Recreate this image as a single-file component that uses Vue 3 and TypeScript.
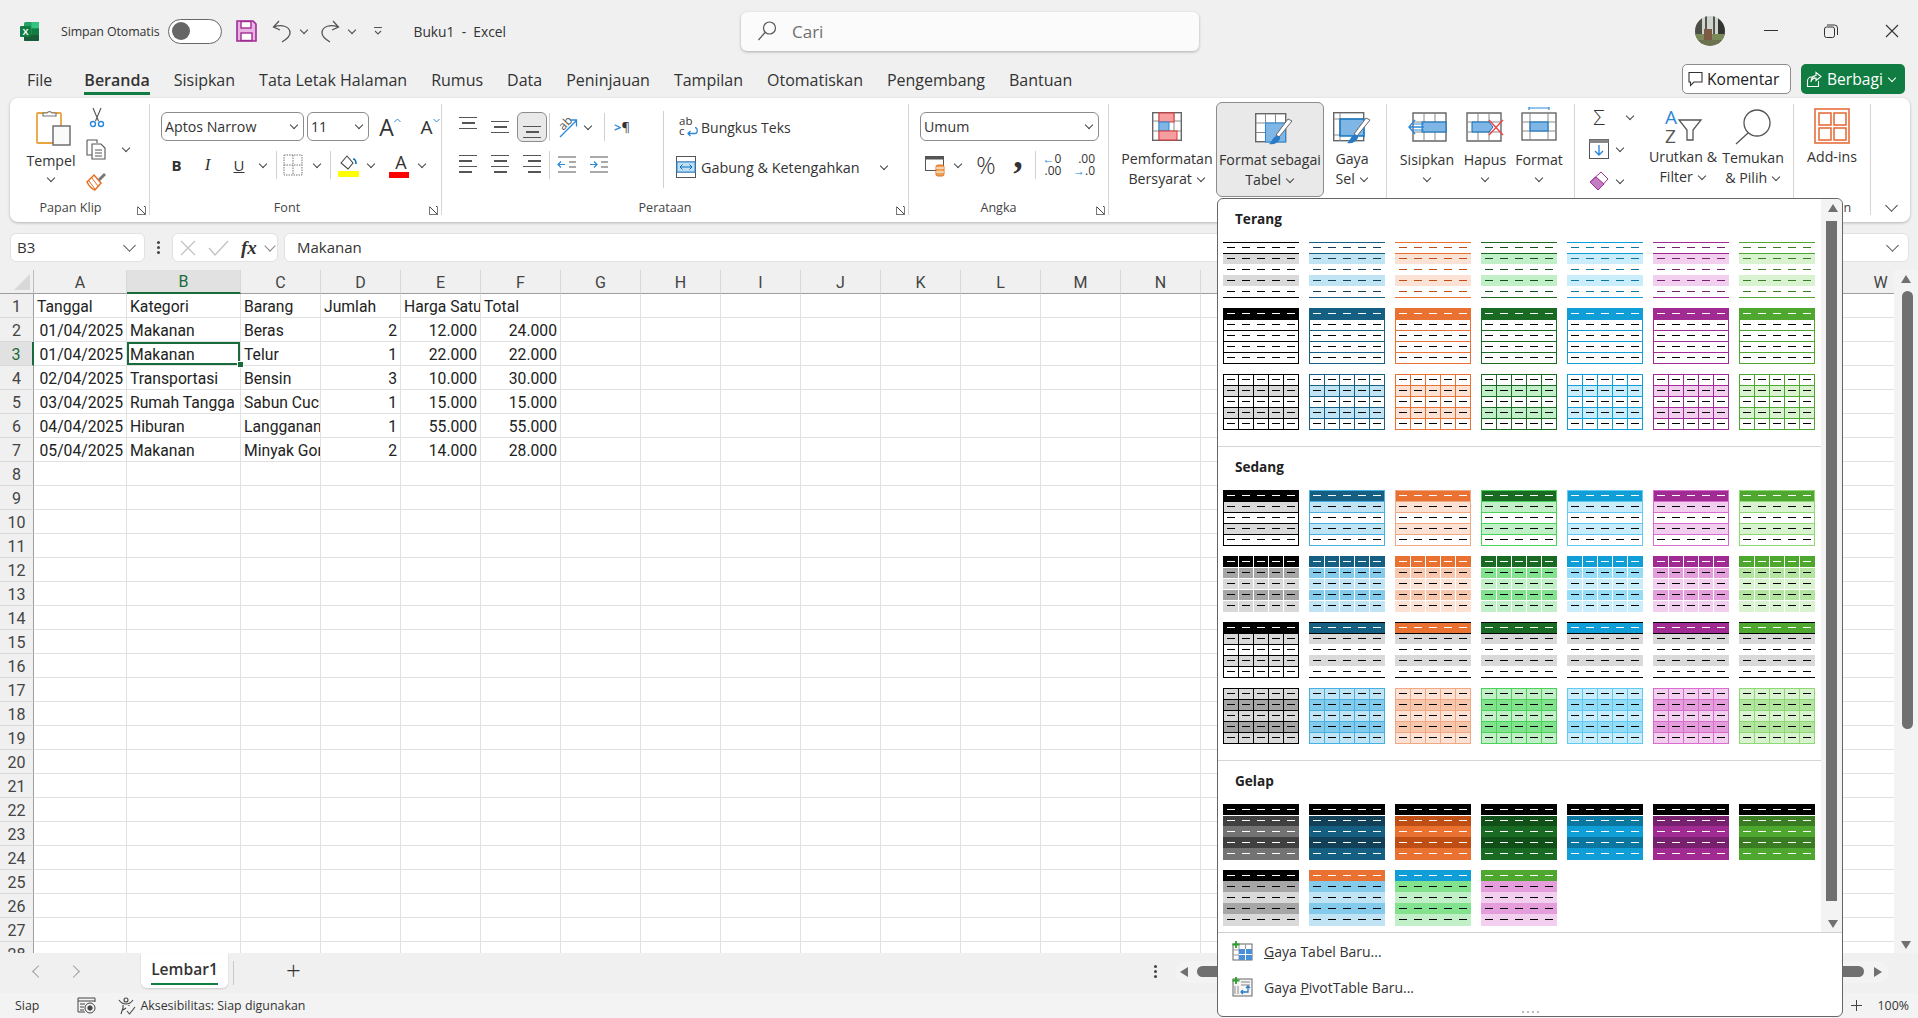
<template>
  <div class="app">
    <!-- title bar -->
    <header class="titlebar">
      <svg class="xl-logo" width="21" height="21" viewBox="0 0 21 21">
        <rect x="5" y="1" width="15" height="19" rx="1.5" fill="#21a366" />
        <rect x="12.5" y="1" width="7.5" height="6.5" fill="#33c481" />
        <rect x="12.5" y="7.5" width="7.5" height="6" fill="#107c41" />
        <rect x="5" y="13.5" width="15" height="6.5" rx="1" fill="#185c37" />
        <rect x="1" y="5" width="11" height="11" rx="1" fill="#107c41" />
        <text x="6.5" y="13.6" text-anchor="middle" class="xl-x">X</text>
      </svg>
      <span class="autosave">Simpan Otomatis</span>
      <span class="toggle"><i></i></span>
      <svg class="qat-save" width="21" height="22" viewBox="0 0 21 22">
        <path d="M1 1h16l3 3v17H1z" fill="#e9b3e4" stroke="#a02b93" stroke-width="1.6" />
        <rect x="5" y="1.5" width="10" height="6.5" fill="#fff" stroke="#a02b93" stroke-width="1.4" />
        <rect x="5" y="13" width="11" height="7.5" fill="#fff" stroke="#a02b93" stroke-width="1.4" />
      </svg>
      <svg class="qat-undo" width="20" height="24" viewBox="0 0 20 24" fill="none" stroke="#555" stroke-width="1.3">
        <path d="M7 2 1.5 8 8 11M2 8c7-3 16-1 16 6 0 3-3 6-8 9" />
      </svg>
      <span class="chev qat-chev"></span>
      <svg class="qat-redo" width="20" height="24" viewBox="0 0 20 24" fill="none" stroke="#555" stroke-width="1.3">
        <path d="M13 2l5.500 6L12 11M18 8C11 5 2 7 2 14c0 3 3 6 8 9" />
      </svg>
      <span class="chev qat-chev"></span>
      <svg class="qat-more" width="10" height="10" viewBox="0 0 10 10" fill="none" stroke="#555" stroke-width="1.1">
        <path d="M1 1.500h8M2 5l3 3 3-3" />
      </svg>
      <span class="doc-title">Buku1&nbsp; - &nbsp;Excel</span>
      <div class="search">
        <svg width="20" height="20" viewBox="0 0 20 20" fill="none" stroke="#555" stroke-width="1.2">
          <circle cx="12.500" cy="7" r="6" />
          <path d="M8 11.500 1.500 19" />
        </svg>
        <span>Cari</span>
      </div>
      <svg class="avatar" width="30" height="30" viewBox="0 0 30 30">
        <defs>
          <clipPath id="avatar-clip"><circle cx="15" cy="15" r="15" /></clipPath>
        </defs>
        <g clip-path="url(#avatar-clip)">
          <rect width="30" height="30" fill="#cfd4cf" />
          <rect x="0" y="0" width="7" height="30" fill="#4b4f48" />
          <rect x="23" y="0" width="7" height="30" fill="#33352f" />
          <rect x="10" y="0" width="2" height="22" fill="#55564f" />
          <rect x="18" y="0" width="2" height="22" fill="#55564f" />
          <rect x="0" y="18" width="30" height="6" fill="#7a8a58" />
          <rect x="9" y="13" width="8" height="12" fill="#7d5a43" />
          <rect x="0" y="24" width="30" height="6" fill="#6c7150" />
        </g>
      </svg>
      <svg class="win-min" width="14" height="2" viewBox="0 0 14 2"><rect width="14" height="1" fill="#333" /></svg>
      <svg class="win-max" width="14" height="14" viewBox="0 0 14 14" fill="none" stroke="#333">
        <rect x="0.500" y="3" width="10" height="10.500" rx="2" />
        <path d="M3 1h7.500a3 3 0 0 1 3 3v7" />
      </svg>
      <svg class="win-close" width="14" height="14" viewBox="0 0 14 14" fill="none" stroke="#333" stroke-width="1.100">
        <path d="M1 1l12 12M13 1 1 13" />
      </svg>
    </header>

    <!-- menu tabs -->
    <nav class="tabs">
      <span v-for="tab in tabs" :key="tab" class="tab" :class="{ active: tab === 'Beranda' }">{{ tab }}</span>
      <div class="tab-actions">
        <button class="btn-comment">
          <svg width="15" height="16" viewBox="0 0 15 16" fill="none" stroke="#333" stroke-width="1.100">
            <path d="M1 1.500h13v9.500H6l-3.500 3.500V11H1z" />
          </svg>
          Komentar
        </button>
        <button class="btn-share">
          <svg width="17" height="17" viewBox="0 0 17 17" fill="none" stroke="#fff" stroke-width="1.100">
            <path d="M9 6H5.500v0C3 6 1.500 8 1.500 10v5.500h11V10" />
            <path d="M10 1.500l5 4-5 4V7C7 7 5.500 8.500 5 11c0-4 2-6.500 5-6.500z" />
          </svg>
          Berbagi
          <span class="chev chev-white"></span>
        </button>
      </div>
    </nav>

    <!-- ribbon -->
    <section class="ribbon">
      <div class="group g-clip">
        <div class="group-body clip-body">
          <div class="paste">
            <svg width="36" height="38" viewBox="0 0 36 38">
              <rect x="1" y="5" width="24" height="30" rx="1" fill="#fff" stroke="#e9a440" stroke-width="1.800" />
              <path d="M7 8V5h4a3 3 0 0 1 5 0h4v3z" fill="#fff" stroke="#777" stroke-width="1.200" />
              <rect x="17" y="18" width="17" height="19" fill="#fafafa" stroke="#666" stroke-width="1.400" />
            </svg>
            <span class="lbl">Tempel</span>
            <span class="chev paste-chev"></span>
          </div>
          <div class="clip-tools">
            <svg class="scissors" width="16" height="21" viewBox="0 0 16 21" fill="none" stroke="#555" stroke-width="1.100">
              <path d="M4 1l5.500 13M12 1 6.500 14" />
              <circle cx="4" cy="17" r="2.500" stroke="#2b88d8" stroke-width="1.400" />
              <circle cx="12" cy="17" r="2.500" stroke="#2b88d8" stroke-width="1.400" />
            </svg>
            <div class="copy-row">
              <svg width="22" height="21" viewBox="0 0 22 21" fill="none" stroke="#555" stroke-width="1.100">
                <path d="M1 1h10v3M1 1v15h5" />
                <path d="M6 5h9l4 4v11H6z" fill="#fff" />
                <path d="M9 11h7M9 14h7M9 17h7" />
              </svg>
              <span class="chev"></span>
            </div>
            <svg width="21" height="20" viewBox="0 0 21 20">
              <path d="M1 11 8 4l7 8-6 7c-3-1-6-4-8-8z" fill="#fff" stroke="#e56f1d" stroke-width="1.500" />
              <path d="M3 10l6 8M6 7l6 8" stroke="#e56f1d" />
              <path d="M12 8l6-6 2 2-6 6z" fill="#777" />
            </svg>
          </div>
        </div>
        <div class="group-label">Papan Klip</div>
        <span class="launcher"></span>
      </div>

      <div class="group g-font">
        <div class="group-body">
          <div class="font-r1">
            <div class="select"><span>Aptos Narrow</span><span class="chev"></span></div>
            <div class="select"><span>11</span><span class="chev"></span></div>
            <span class="grow-a">A<svg width="7" height="5" viewBox="0 0 7 5" fill="none" stroke="#2b88d8"><path d="M.5 4 3.500 1l3 3" /></svg></span>
            <span class="shrink-a">A<svg width="7" height="5" viewBox="0 0 7 5" fill="none" stroke="#2b88d8"><path d="M.5 1l3 3 3-3" /></svg></span>
          </div>
          <div class="font-r2">
            <b class="fmt">B</b>
            <i class="fmt fmt-i">I</i>
            <u class="fmt fmt-u">U</u>
            <span class="chev"></span>
            <span class="vsep"></span>
            <svg width="20" height="22" viewBox="0 0 20 22" fill="none" stroke="#777" stroke-dasharray="1.500 1">
              <rect x="1" y="1" width="18" height="20" /><path d="M10 1v20M1 11h18" />
            </svg>
            <span class="chev"></span>
            <span class="vsep"></span>
            <svg width="21" height="23" viewBox="0 0 21 23">
              <path d="M3 9 9 2l6 7-5 6z" fill="#fff" stroke="#444" stroke-width="1.100" />
              <path d="M15 5c2 0 3 2 3 5" fill="none" stroke="#0b6fb8" stroke-width="1.600" />
              <rect y="17" width="21" height="6" fill="#ffff00" />
            </svg>
            <span class="chev"></span>
            <span class="font-color">A<em></em></span>
            <span class="chev"></span>
          </div>
        </div>
        <div class="group-label">Font</div>
        <span class="launcher"></span>
      </div>

      <div class="group g-align">
        <div class="group-body align-body">
          <div class="align-left">
            <div class="align-r1">
              <span class="lines v-top"><i></i><i></i><i></i></span>
              <span class="lines v-mid"><i></i><i></i><i></i></span>
              <span class="lines v-bot selected"><i></i><i></i><i></i></span>
              <span class="vsep vsep-tall"></span>
              <svg class="svg-open" width="24" height="24" viewBox="0 0 24 24" fill="none">
                <text x="5" y="14" class="orient-t" transform="rotate(-45 9 11)">ab</text>
                <path d="M5 22 21 6M15 5h6.500v6.500" stroke="#2b88d8" stroke-width="1.300" />
              </svg>
              <span class="chev"></span>
              <span class="vsep vsep-tall"></span>
              <span class="rtl"><em>&gt;</em>¶</span>
            </div>
            <div class="align-r2">
              <span class="lines h-left"><i></i><i></i><i></i><i></i></span>
              <span class="lines h-center"><i></i><i></i><i></i><i></i></span>
              <span class="lines h-right"><i></i><i></i><i></i><i></i></span>
              <span class="vsep vsep-tall"></span>
              <svg width="20" height="20" viewBox="0 0 20 20" fill="none" stroke="#555" stroke-width="1.200">
                <path d="M1 2h18M12 7h7M12 12h7M1 17h18" />
                <path d="M8 9.500H1M4 6.500l-3 3 3 3" stroke="#2b88d8" />
              </svg>
              <svg width="20" height="20" viewBox="0 0 20 20" fill="none" stroke="#555" stroke-width="1.200">
                <path d="M1 2h18M12 7h7M12 12h7M1 17h18" />
                <path d="M1 9.500h7M5 6.500l3 3-3 3" stroke="#2b88d8" />
              </svg>
            </div>
          </div>
          <span class="vsep wrap-sep"></span>
          <div class="wrap-block">
            <div class="wrap-item">
              <span class="wrap-ico">
                <span class="wrap-ab">ab<br />c</span>
                <svg width="11" height="10" viewBox="0 0 11 10" fill="none" stroke="#2b88d8" stroke-width="1.300">
                  <path d="M8 .5c3 0 3 6 0 6H1M3.500 4 1 6.500 3.500 9" />
                </svg>
              </span>
              <span>Bungkus Teks</span>
            </div>
            <div class="wrap-item merge">
              <svg width="20" height="22" viewBox="0 0 20 22">
                <rect x=".5" y=".5" width="19" height="21" fill="#fff" stroke="#555" />
                <path d="M1 6h18M1 16h18" stroke="#555" />
                <rect x="1" y="6" width="18" height="10" fill="#bfdff5" stroke="#2b88d8" />
                <path d="M4 11h12M6.500 8.500 4 11l2.500 2.500M13.500 8.500 16 11l-2.500 2.500" fill="none" stroke="#0b6fb8" />
              </svg>
              <span class="merge-text">Gabung &amp; Ketengahkan</span>
              <span class="chev merge-chev"></span>
            </div>
          </div>
        </div>
        <div class="group-label">Perataan</div>
        <span class="launcher"></span>
      </div>

      <div class="group g-num">
        <div class="group-body">
          <div class="select num-select"><span>Umum</span><span class="chev"></span></div>
          <div class="num-r2">
            <svg width="20" height="23" viewBox="0 0 20 23">
              <rect x=".5" y="2.500" width="18" height="14" fill="#fff" stroke="#555" />
              <rect x=".5" y="2.500" width="18" height="3" fill="#555" />
              <rect x="11" y="11" width="8" height="11" rx="2" fill="#e9a45a" stroke="#e56f1d" />
              <path d="M11 14h8M11 18h8" stroke="#fff" />
            </svg>
            <span class="chev"></span>
            <span class="percent">%</span>
            <span class="comma">,</span>
            <span class="vsep"></span>
            <span class="dec-ico"><em>←</em>0<br />.00</span>
            <span class="dec-ico">.00<br /><em>→</em>.0</span>
          </div>
        </div>
        <div class="group-label">Angka</div>
        <span class="launcher"></span>
      </div>

      <div class="group g-style">
        <div class="group-body big-row">
          <div class="big b-cond">
            <svg class="big-ico" width="30" height="29" viewBox="0 0 30 29">
              <rect x=".7" y=".7" width="28.600" height="27.600" fill="#fff" stroke="#666" stroke-width="1.400" />
              <path d="M7 1v27M22 1v27M1 9h28M1 19h28" stroke="#888" />
              <rect x="7" y="1" width="15" height="9" fill="#f79ea0" stroke="#d93636" />
              <rect x="7" y="10" width="10" height="9" fill="#7fb6e6" stroke="#2b88d8" />
              <rect x="7" y="19" width="18" height="9" fill="#f79ea0" stroke="#d93636" />
            </svg>
            <span class="lbl">Pemformatan</span>
            <span class="lbl">Bersyarat <span class="chev"></span></span>
          </div>
          <div class="big b-table">
            <svg class="big-ico" width="38" height="36" viewBox="0 0 38 36">
              <rect x=".7" y=".7" width="30" height="28" fill="#fff" stroke="#666" stroke-width="1.400" />
              <path d="M10.500 1v28M20.500 1v28M1 10h30M1 19.500h30" stroke="#888" />
              <rect x="10.500" y="10" width="20" height="19" fill="#7fb6e6" stroke="#2b88d8" />
              <path d="M37 8 24 24l-3-2L33 6z" fill="#fff" stroke="#666" />
              <path d="M21 23c3-1 5 1 4 3-2 4-6 6-11 5 3-2 3-6 7-8z" fill="#2b7bc4" />
            </svg>
            <span class="lbl">Format sebagai</span>
            <span class="lbl">Tabel <span class="chev"></span></span>
          </div>
          <div class="big b-cell">
            <svg class="big-ico" width="38" height="36" viewBox="0 0 38 36">
              <rect x=".7" y=".7" width="30" height="28" fill="#fff" stroke="#666" stroke-width="1.400" />
              <path d="M7 1v28M1 7h30M1 23h30" stroke="#888" />
              <rect x="7" y="7" width="24" height="17" fill="#7fb6e6" stroke="#0b6fb8" stroke-width="1.400" />
              <path d="M37 8 24 24l-3-2L33 6z" fill="#fff" stroke="#666" />
              <path d="M21 23c3-1 5 1 4 3-2 4-6 6-11 5 3-2 3-6 7-8z" fill="#2b7bc4" />
            </svg>
            <span class="lbl">Gaya</span>
            <span class="lbl">Sel <span class="chev"></span></span>
          </div>
        </div>
      </div>

      <div class="group g-cells">
        <div class="group-body big-row">
          <div class="big b-ins">
            <svg class="big-ico" width="40" height="30" viewBox="0 0 40 30">
              <path d="M6 1h33v28H6z" fill="#fff" stroke="#666" stroke-width="1.400" />
              <path d="M17 1v28M28 1v28M6 10h33M6 20h33" stroke="#888" />
              <rect x="15" y="10" width="24" height="10" fill="#7fb6e6" stroke="#0b6fb8" />
              <path d="M17 15H2M8 8l-6 7 6 7" fill="none" stroke="#2b88d8" stroke-width="1.400" />
              <path d="M17 12H6M17 18H6" stroke="#2b88d8" />
            </svg>
            <span class="lbl">Sisipkan</span>
            <span class="chev"></span>
          </div>
          <div class="big b-del">
            <svg class="big-ico" width="38" height="30" viewBox="0 0 38 30">
              <path d="M1 1h34v28H1z" fill="#fff" stroke="#666" stroke-width="1.400" />
              <path d="M12 1v28M23 1v28M1 10h34M1 20h34" stroke="#888" />
              <path d="M6 10h17l4 5-4 5H6z" fill="#7fb6e6" stroke="#0b6fb8" />
              <path d="M23 8l14 15M37 8 23 23" stroke="#ef4444" stroke-width="1.400" />
            </svg>
            <span class="lbl">Hapus</span>
            <span class="chev"></span>
          </div>
          <div class="big b-frm">
            <svg class="big-ico" width="36" height="34" viewBox="0 0 36 34">
              <path d="M8 1h20M8 0v3M28 0v3" stroke="#2b88d8" stroke-width="1.200" />
              <rect x="1" y="6" width="34" height="27" fill="#fff" stroke="#666" stroke-width="1.400" />
              <path d="M9 6v27M27 6v27M1 15h34M1 24h34" stroke="#888" />
              <rect x="9" y="15" width="18" height="9" fill="#7fb6e6" stroke="#0b6fb8" />
            </svg>
            <span class="lbl">Format</span>
            <span class="chev"></span>
          </div>
        </div>
      </div>

      <div class="group g-edit">
        <div class="group-body big-row">
          <div class="edit-col">
            <div class="edit-row">
              <span class="sigma">Σ</span><span class="chev sigma-chev"></span>
            </div>
            <div class="edit-row">
              <svg width="20" height="20" viewBox="0 0 20 20">
                <rect x=".5" y=".5" width="19" height="19" fill="#fff" stroke="#555" />
                <rect x=".5" y=".5" width="19" height="3.500" fill="#888" />
                <path d="M10 6v10M6 12l4 4 4-4" fill="none" stroke="#2b88d8" stroke-width="1.400" />
              </svg>
              <span class="chev"></span>
            </div>
            <div class="edit-row">
              <svg width="20" height="20" viewBox="0 0 20 20">
                <path d="M12 1l7 7-10 11-8-8z" fill="#fff" stroke="#a02b93" />
                <path d="M7 6l8 7-6 6-8-8z" fill="#c27ec0" stroke="#a02b93" />
              </svg>
              <span class="chev"></span>
            </div>
          </div>
          <div class="big b-sort">
            <svg class="big-ico svg-open" width="38" height="36" viewBox="0 0 38 36" fill="none">
              <text x="1" y="16" class="sort-a">A</text>
              <text x="1" y="35" class="sort-z">Z</text>
              <path d="M15 12h22l-8 10v10h-6V22z" stroke="#555" stroke-width="1.300" />
            </svg>
            <span class="lbl">Urutkan &amp;</span>
            <span class="lbl">Filter <span class="chev"></span></span>
          </div>
          <div class="big b-find">
            <svg class="big-ico" width="38" height="37" viewBox="0 0 38 37" fill="none" stroke="#555" stroke-width="1.300">
              <circle cx="23" cy="15" r="13" />
              <path d="M14 25 2 36" />
            </svg>
            <span class="lbl">Temukan</span>
            <span class="lbl">&amp; Pilih <span class="chev"></span></span>
          </div>
        </div>
      </div>

      <div class="group g-add">
        <div class="group-body big-row">
          <div class="big b-add">
            <svg class="big-ico" width="36" height="36" viewBox="0 0 36 36" fill="none" stroke="#e56f3c" stroke-width="1.600">
              <rect x="1" y="1" width="34" height="34" />
              <rect x="5" y="5" width="12" height="12" />
              <rect x="20" y="5" width="12" height="12" />
              <rect x="5" y="20" width="12" height="12" />
              <rect x="20" y="20" width="12" height="12" />
            </svg>
            <span class="lbl">Add-ins</span>
          </div>
        </div>
        <div class="group-label">Add-in</div>
      </div>

      <span class="ribbon-collapse"></span>
    </section>

    <!-- formula bar -->
    <div class="formula">
      <div class="namebox"><span>B3</span><span class="chev chev-big"></span></div>
      <span class="dots-v"></span>
      <div class="fx-box">
        <svg width="16" height="16" viewBox="0 0 16 16" fill="none" stroke="#c2c2c2" stroke-width="1.300"><path d="M1 1l14 14M15 1 1 15" /></svg>
        <svg width="21" height="16" viewBox="0 0 21 16" fill="none" stroke="#c2c2c2" stroke-width="1.300"><path d="M1 8l6 7L20 1" /></svg>
        <span class="fx">fx</span>
        <span class="chev chev-grey"></span>
      </div>
      <div class="formula-input">
        <span>Makanan</span>
        <span class="chev chev-big"></span>
      </div>
    </div>

    <!-- sheet -->
    <div class="sheet">
      <div class="grid">
        <div class="corner"><i></i></div>
        <div v-for="col in columns" :key="col" class="col-head" :class="{ sel: col === 'B' }">{{ col }}</div>
        <template v-for="row in rowNums" :key="row">
          <div class="row-head" :class="{ sel: row === 3 }">{{ row }}</div>
          <div
            v-for="(col, c) in columns"
            :key="col"
            class="cell"
            :class="{ num: isNumeric(row, c), active: col === 'B' && row === 3 }"
          >{{ cellText(row, c) }}</div>
        </template>
      </div>
      <div class="vscroll">
        <span class="tri tri-up"></span>
        <span class="vthumb"></span>
        <span class="tri tri-down"></span>
      </div>
    </div>

    <!-- sheet tabs -->
    <div class="sheet-tabs">
      <span class="nav-arrow nav-left"></span>
      <span class="nav-arrow nav-right"></span>
      <div class="sheet-tab"><span>Lembar1</span></div>
      <span class="tab-sep"></span>
      <span class="add-sheet">+</span>
      <span class="dots-v dots-tabs"></span>
      <div class="hscroll">
        <span class="tri tri-left"></span>
        <span class="hthumb"></span>
        <span class="tri tri-right"></span>
      </div>
    </div>

    <!-- status bar -->
    <footer class="status">
      <span class="st-ready">Siap</span>
      <svg class="st-macro" width="19" height="17" viewBox="0 0 19 17" fill="none" stroke="#444">
        <path d="M1 1h17v4M1 1v14h7M1 4h17M3 7h5M3 10h4M3 13h4" />
        <circle cx="13" cy="11" r="5" />
        <circle cx="13" cy="11" r="2.200" fill="#444" />
      </svg>
      <svg class="st-a11y" width="18" height="18" viewBox="0 0 18 18" fill="none" stroke="#444" stroke-width="1.100">
        <circle cx="8" cy="3" r="2" />
        <path d="M1 3c2 3 4 4 7 4s5-1 7-4M5 8v3l-2 6M11 8v1M5 13l3-2" />
        <path d="M9 14l2.500 3L17 10" />
      </svg>
      <span class="st-a11y-text">Aksesibilitas: Siap digunakan</span>
      <span class="st-zoom">
        <svg width="11" height="11" viewBox="0 0 11 11" stroke="#444"><path d="M0 5.500h11M5.500 0v11" /></svg>
        <span>100%</span>
      </span>
    </footer>

    <!-- table styles gallery -->
    <div class="popup">
      <div class="gallery">
        <div class="styles">
          <section v-for="(group, g) in galleries" :key="group.title" class="style-group" :class="{ first: g === 0 }">
            <h4>{{ group.title }}</h4>
            <div class="thumbs">
              <svg
                v-for="(rects, t) in group.thumbs"
                :key="t"
                width="76"
                height="56"
                viewBox="0 0 76 56"
                shape-rendering="crispEdges"
              >
                <rect
                  v-for="(r, i) in rects"
                  :key="i"
                  :x="r.x"
                  :y="r.y"
                  :width="r.w"
                  :height="r.h"
                  :fill="r.c"
                />
              </svg>
            </div>
          </section>
        </div>
        <div class="gal-scroll">
          <span class="tri tri-up"></span>
          <span class="gal-thumb"></span>
          <span class="tri tri-down"></span>
        </div>
      </div>
      <div class="menu-item">
        <svg width="21" height="20" viewBox="0 0 21 20">
          <rect x="1" y="3" width="19" height="16" fill="#fff" stroke="#666" />
          <path d="M7 3v16M13.500 3v16M1 9h19M1 14h19" stroke="#999" />
          <rect x="7" y="8" width="13" height="11" fill="#4a90d6" />
          <path d="M13.500 8v11M7 13.500h13" stroke="#fff" />
          <path d="M4 0v7M.5 3.500h7" stroke="#2ca02c" stroke-width="1.800" />
        </svg>
        <span><u>G</u>aya Tabel Baru...</span>
      </div>
      <div class="menu-item">
        <svg width="21" height="20" viewBox="0 0 21 20" fill="none">
          <rect x="1" y="2" width="19" height="17" fill="#f5f5f5" stroke="#666" />
          <path d="M9 5h9M9 8h9M3 9v8M6 9v8" stroke="#aaa" stroke-width="1.400" />
          <path d="M16 9v6H9M11 13l-2 2 2 2M14 11l2-2 2 2" stroke="#2b7bc4" stroke-width="1.300" />
          <path d="M4 0v7M.5 3.500h7" stroke="#2ca02c" stroke-width="1.800" />
        </svg>
        <span>Gaya <u>P</u>ivotTable Baru...</span>
      </div>
      <div class="grip"><i></i><i></i><i></i><i></i></div>
    </div>
  </div>
</template>

<script setup lang="ts">
interface Palette {
  main: string
  dark: string
  mid: string
  t1: string
  t2: string
}

interface ThumbRect {
  x: number
  y: number
  w: number
  h: number
  c: string
}

type Kind = 'l1' | 'l2' | 'l3' | 'm1' | 'm2' | 'm3' | 'm4' | 'd1' | 'd2'

const tabs = [
  'File', 'Beranda', 'Sisipkan', 'Tata Letak Halaman', 'Rumus', 'Data', 'Peninjauan',
  'Tampilan', 'Otomatiskan', 'Pengembang', 'Bantuan'
]

const columns = 'ABCDEFGHIJKLMNOPQRSTUVW'.split('')
const rowNums = Array.from({ length: 28 }, (_, i) => i + 1)

const sheetData: string[][] = [
  ['Tanggal', 'Kategori', 'Barang', 'Jumlah', 'Harga Satuan', 'Total'],
  ['01/04/2025', 'Makanan', 'Beras', '2', '12.000', '24.000'],
  ['01/04/2025', 'Makanan', 'Telur', '1', '22.000', '22.000'],
  ['02/04/2025', 'Transportasi', 'Bensin', '3', '10.000', '30.000'],
  ['03/04/2025', 'Rumah Tangga', 'Sabun Cuci', '1', '15.000', '15.000'],
  ['04/04/2025', 'Hiburan', 'Langganan Film', '1', '55.000', '55.000'],
  ['05/04/2025', 'Makanan', 'Minyak Goreng', '2', '14.000', '28.000']
]

const cellText = (row: number, col: number) => sheetData[row - 1]?.[col] ?? ''
const isNumeric = (row: number, col: number) => row > 1 && row <= 7 && (col === 0 || col >= 3)

const black: Palette = { main: '#000000', dark: '#404040', mid: '#000000', t1: '#d9d9d9', t2: '#a6a6a6' }
const blue: Palette = { main: '#156082', dark: '#124058', mid: '#45b0e1', t1: '#c1e4f5', t2: '#83caeb' }
const orange: Palette = { main: '#e97132', dark: '#bf4e14', mid: '#f1a983', t1: '#fbe2d5', t2: '#f6c6ad' }
const green: Palette = { main: '#196b24', dark: '#104f18', mid: '#47d459', t1: '#c1f0c8', t2: '#83e28e' }
const sky: Palette = { main: '#0f9ed5', dark: '#0b76a0', mid: '#60caf3', t1: '#caedfb', t2: '#95dcf7' }
const purple: Palette = { main: '#a02b93', dark: '#77206d', mid: '#d86dcd', t1: '#f2ceef', t2: '#e59edc' }
const lime: Palette = { main: '#4ea72e', dark: '#3a7c22', mid: '#8ed973', t1: '#d9f2d0', t2: '#b3e5a1' }
const allPalettes = [black, blue, orange, green, sky, purple, lime]

const rowEdges = [0, 11, 22, 33, 44, 56]

// every gallery thumbnail is five rows of five dashes on top of bands and rules
function thumb(kind: Kind, p: Palette, head = p.main): ThumbRect[] {
  const out: ThumbRect[] = []
  const put = (x: number, y: number, w: number, h: number, c: string) => out.push({ x, y, w, h, c })
  const band = (row: number, c: string) => put(0, rowEdges[row], 76, rowEdges[row + 1] - rowEdges[row], c)
  const hLines = (c: string) => [11, 22, 33, 44].forEach((y) => put(0, y, 76, 1, c))
  const vLines = (c: string) => [15, 30, 45, 60].forEach((x) => put(x, 0, 1, 56, c))
  const frame = (c: string) => {
    put(0, 0, 76, 1, c)
    put(0, 55, 76, 1, c)
    put(0, 0, 1, 56, c)
    put(75, 0, 1, 56, c)
  }
  const isBlack = p === black
  let headDash = '#ffffff'
  let bodyDash = '#000000'

  switch (kind) {
    case 'l1':
      band(1, p.t1)
      band(3, p.t1)
      put(0, 0, 76, 1, p.main)
      put(0, 11, 76, 1, p.main)
      put(0, 55, 76, 1, p.main)
      headDash = isBlack ? '#000000' : p.dark
      bodyDash = headDash
      break
    case 'l2':
      band(0, p.main)
      hLines(p.main)
      frame(p.main)
      break
    case 'l3':
      band(1, p.t1)
      band(3, p.t1)
      hLines(p.main)
      vLines(p.main)
      frame(p.main)
      headDash = '#000000'
      break
    case 'm1':
      band(1, p.t1)
      band(3, p.t1)
      hLines(p.mid)
      frame(p.mid)
      band(0, p.main)
      put(0, 0, 76, 1, p.mid)
      put(0, 0, 1, 11, p.mid)
      put(75, 0, 1, 11, p.mid)
      break
    case 'm2':
      band(0, p.main)
      band(1, p.t2)
      band(2, p.t1)
      band(3, p.t2)
      band(4, p.t1)
      hLines('#ffffff')
      vLines('#ffffff')
      break
    case 'm3':
      band(0, p.main)
      band(1, '#d9d9d9')
      band(3, '#d9d9d9')
      if (isBlack) {
        hLines('#000000')
        vLines('#000000')
        frame('#000000')
      } else {
        put(0, 0, 76, 1, '#000000')
        put(0, 11, 76, 1, '#000000')
        put(0, 55, 76, 1, '#000000')
      }
      break
    case 'm4':
      band(0, p.t1)
      band(1, p.t2)
      band(2, p.t1)
      band(3, p.t2)
      band(4, p.t1)
      hLines(p.mid)
      vLines(p.mid)
      frame(p.mid)
      headDash = '#000000'
      break
    case 'd1':
      band(1, p.dark)
      band(2, isBlack ? '#737373' : p.main)
      band(3, p.dark)
      band(4, isBlack ? '#737373' : p.main)
      band(0, '#000000')
      put(0, 11, 76, 1, '#ffffff')
      bodyDash = '#ffffff'
      break
    case 'd2':
      band(1, p.t2)
      band(2, p.t1)
      band(3, p.t2)
      band(4, p.t1)
      band(0, head)
      break
  }

  rowEdges.slice(0, 5).forEach((_, r) => {
    const y = 5 + r * 11
    ;[4, 19, 34, 49, 64].forEach((x) => put(x, y, 8, 1, r === 0 ? headDash : bodyDash))
  })
  return out
}

const rowOf = (kind: Kind) => allPalettes.map((p) => thumb(kind, p))

const galleries = [
  { title: 'Terang', thumbs: [...rowOf('l1'), ...rowOf('l2'), ...rowOf('l3')] },
  { title: 'Sedang', thumbs: [...rowOf('m1'), ...rowOf('m2'), ...rowOf('m3'), ...rowOf('m4')] },
  {
    title: 'Gelap',
    thumbs: [
      ...rowOf('d1'),
      thumb('d2', black),
      thumb('d2', blue, orange.main),
      thumb('d2', green, sky.main),
      thumb('d2', purple, lime.main)
    ]
  }
]
</script>

<style>
html,
body {
  margin: 0;
  overflow: hidden;
}
</style>

<style scoped>
.app {
  position: relative;
  display: flex;
  flex-direction: column;
  width: 1918px;
  height: 1018px;
  overflow: hidden;
  background: #f0f0f0;
  font-family: "Open Sans", "Noto Sans", sans-serif;
  color: #333;
}

.chev {
  display: inline-block;
  width: 5px;
  height: 5px;
  margin: 0 2px 3px;
  border-right: 1.2px solid #444;
  border-bottom: 1.2px solid #444;
  transform: rotate(45deg);
}

.chev-big {
  width: 8px;
  height: 8px;
  border-color: #555;
}

.chev-grey {
  width: 7px;
  height: 7px;
  border-color: #888;
}

.chev-white {
  border-color: #fff;
}

.svg-open {
  overflow: visible;
}

.titlebar {
  display: flex;
  align-items: center;
  flex: 0 0 62px;
}

.xl-logo {
  margin-left: 19px;
}

.xl-x {
  font: bold 9px "Liberation Sans", sans-serif;
  fill: #fff;
}

.autosave {
  margin-left: 21px;
  font-size: 12.4px;
  letter-spacing: -0.1px;
}

.toggle {
  display: flex;
  align-items: center;
  box-sizing: border-box;
  width: 54px;
  height: 25px;
  margin-left: 8px;
  padding-left: 3px;
  border: 1.5px solid #666;
  border-radius: 13px;
  background: #fff;
}

.toggle i {
  width: 18px;
  height: 18px;
  border-radius: 50%;
  background: #666;
}

.qat-save {
  margin-left: 14px;
}

.qat-undo {
  margin-left: 15px;
}

.qat-chev {
  margin-left: 9px;
}

.qat-redo {
  margin-left: 11px;
}

.qat-more {
  margin-left: 16px;
}

.doc-title {
  margin-left: 31px;
  font-size: 13.8px;
}

.search {
  display: flex;
  align-items: center;
  box-sizing: border-box;
  width: 458px;
  height: 39px;
  margin-left: 235px;
  padding-left: 16px;
  background: #fbfbfb;
  border-radius: 6px;
  box-shadow: 0 1px 3px rgba(0, 0, 0, 0.28);
  font-size: 17px;
  color: #707070;
}

.search span {
  margin-left: 15px;
}

.avatar {
  margin-left: 496px;
}

.win-min {
  margin-left: 39px;
}

.win-max {
  margin-left: 46px;
}

.win-close {
  margin-left: 47px;
}

.tabs {
  display: flex;
  flex: 0 0 36px;
  align-items: flex-start;
  padding-left: 27px;
  gap: 24px;
  font-size: 16px;
  color: #333;
}

.tab {
  position: relative;
  height: 30px;
  line-height: 36px;
}

.tab:first-child {
  margin-right: 8px;
}

.tab.active {
  font-weight: 600;
}

.tab.active::after {
  content: "";
  position: absolute;
  left: 0;
  right: 0;
  top: 30px;
  height: 3px;
  background: #107c41;
}

.tab-actions {
  display: flex;
  gap: 10px;
  margin-left: auto;
  margin-right: 13px;
  margin-top: 2px;
}

.btn-comment,
.btn-share {
  display: flex;
  align-items: center;
  box-sizing: border-box;
  height: 30px;
  padding: 0;
  border-radius: 5px;
  font: 15.6px "Open Sans", sans-serif;
  white-space: nowrap;
}

.btn-comment {
  width: 109px;
  gap: 4px;
  padding-left: 5px;
  background: #fff;
  border: 1px solid #8c8c8c;
  color: #222;
}

.btn-share {
  width: 104px;
  gap: 4px;
  padding-left: 5px;
  border: none;
  background: #107c41;
  color: #fff;
}

.ribbon {
  display: flex;
  flex: 0 0 124px;
  box-sizing: border-box;
  margin: 0 8px 0 10px;
  padding-top: 6px;
  background: #fff;
  border-radius: 8px;
  box-shadow: 0 1px 3px rgba(0, 0, 0, 0.25);
  font-size: 14.2px;
}

.group {
  position: relative;
  display: flex;
  flex-direction: column;
  box-sizing: border-box;
  height: 111px;
  border-right: 1px solid #d6d6d6;
}

.group-body {
  height: 97px;
}

.group-label {
  height: 14px;
  margin-top: 2px;
  line-height: 14px;
  text-align: center;
  font-size: 12.6px;
  color: #444;
}

.launcher {
  position: absolute;
  right: 3px;
  bottom: 0;
  width: 9px;
  height: 9px;
  border: 1px solid #777;
  border-top-color: transparent;
  box-sizing: border-box;
  background: linear-gradient(45deg, transparent 46%, #444 46%, #444 56%, transparent 56%);
}

.lbl {
  line-height: 20px;
  white-space: nowrap;
}

.g-clip {
  width: 140px;
}

.g-clip .group-label {
  padding-right: 18px;
}

.clip-body {
  display: flex;
}

.paste {
  display: flex;
  flex-direction: column;
  align-items: center;
  width: 72px;
  margin-left: 5px;
  padding-top: 4px;
}

.paste svg {
  margin-left: 6px;
}

.paste .lbl {
  margin-top: 5px;
}

.paste-chev {
  margin-top: 4px;
}

.clip-tools {
  display: flex;
  flex-direction: column;
  align-items: flex-start;
  gap: 11px;
  padding-top: 3px;
  margin-left: -1px;
}

.scissors {
  margin-left: 3px;
}

.copy-row {
  display: flex;
  align-items: center;
  gap: 13px;
}

.g-font {
  width: 292px;
  padding-left: 11px;
}

.g-font .group-label {
  padding-right: 28px;
}

.select {
  display: flex;
  align-items: center;
  justify-content: space-between;
  box-sizing: border-box;
  height: 29px;
  padding: 0 4px 0 3px;
  background: #fff;
  border: 1px solid #8c8c8c;
  border-radius: 6px;
  font-size: 14.2px;
}

.font-r1 {
  display: grid;
  grid-template-columns: 143px 62px 36px 36px;
  column-gap: 3px;
  align-items: center;
  margin-top: 8px;
}

.grow-a,
.shrink-a {
  display: flex;
  align-items: flex-start;
  justify-content: center;
  font-size: 23px;
  line-height: 28px;
}

.grow-a svg,
.shrink-a svg {
  margin-top: 5px;
}

.shrink-a {
  font-size: 19px;
  margin-left: 2px;
}

.font-r2 {
  display: grid;
  grid-template-columns: 31px 31px 32px 16px 10px 24px 24px 2px 34px 12px 36px 18px;
  align-items: center;
  justify-items: center;
  height: 28px;
  margin-top: 10px;
}

.fmt {
  font-size: 15px;
  line-height: 20px;
}

.fmt-i {
  font-family: "Liberation Serif", serif;
  font-size: 17px;
}

.vsep {
  display: block;
  width: 1px;
  height: 28px;
  background: #d0d0d0;
}

.font-color {
  position: relative;
  justify-self: end;
  box-sizing: border-box;
  width: 28px;
  height: 26px;
  padding-left: 4px;
  text-align: center;
  font-size: 18px;
  line-height: 20px;
}

.font-color em {
  position: absolute;
  left: 4px;
  bottom: 0;
  width: 20px;
  height: 6px;
  background: #ff0000;
}

.g-align {
  width: 467px;
}

.g-align .group-label {
  padding-right: 20px;
}

.align-body {
  display: flex;
}

.align-left {
  width: 210px;
  margin-left: 10px;
}

.align-r1,
.align-r2 {
  display: grid;
  align-items: center;
  justify-items: center;
}

.align-r1 {
  grid-template-columns: 32px 32px 32px 2px 34px 8px 24px 12px;
  height: 30px;
  margin-top: 8px;
}

.align-r2 {
  grid-template-columns: 32px 32px 32px 2px 34px 30px;
  height: 28px;
  margin-top: 9px;
}

.lines {
  display: flex;
  flex-direction: column;
  box-sizing: border-box;
  width: 30px;
  height: 30px;
  align-items: center;
  gap: 4px;
}

.lines i {
  display: block;
  width: 18px;
  height: 1.4px;
  background: #555;
}

.v-top {
  padding-top: 5px;
}

.v-mid {
  padding-top: 9px;
}

.v-bot {
  padding-top: 13px;
}

.selected {
  background: #e9e9e9;
  border: 1px solid #8c8c8c;
  border-radius: 6px;
}

.v-top i:nth-child(2),
.v-mid i:nth-child(2),
.v-bot i:nth-child(2) {
  width: 13px;
}

.h-left,
.h-center,
.h-right {
  height: 22px;
  padding-top: 1px;
}

.h-left {
  align-items: flex-start;
  padding-left: 6px;
}

.h-right {
  align-items: flex-end;
  padding-right: 6px;
}

.h-left i:nth-child(even),
.h-center i:nth-child(even),
.h-right i:nth-child(even) {
  width: 13px;
}

.orient-t {
  font: 12px "Open Sans", sans-serif;
  fill: #555;
}

.rtl {
  font-size: 13px;
  white-space: nowrap;
}

.rtl em {
  font-style: normal;
  color: #2b88d8;
  font-weight: 700;
}

.wrap-sep {
  height: 77px;
  margin: 7px 0 0 1px;
}

.wrap-block {
  display: flex;
  flex-direction: column;
  gap: 16px;
  padding-top: 11px;
  margin-left: 12px;
}

.wrap-item {
  display: flex;
  align-items: center;
  height: 24px;
  font-size: 14px;
  white-space: nowrap;
}

.merge-text {
  font-size: 14.4px;
}

.wrap-ico {
  position: relative;
  display: block;
  width: 19px;
  height: 24px;
  margin: 0 3px 0 3px;
}

.wrap-ab {
  display: block;
  font-size: 11.500px;
  line-height: 10px;
  padding-top: 1px;
}

.wrap-ico svg {
  position: absolute;
  right: 0;
  bottom: 2px;
}

.merge svg {
  margin-right: 5px;
}

.merge-chev {
  margin-left: 21px;
}

.g-num {
  width: 200px;
  padding-left: 11px;
}

.g-num .group-label {
  padding-right: 31px;
}

.num-select {
  width: 179px;
  margin-top: 8px;
}

.num-r2 {
  display: grid;
  grid-template-columns: 30px 16px 40px 24px 10px 24px 40px;
  align-items: center;
  justify-items: center;
  height: 28px;
  margin-top: 10px;
}

.percent {
  font-size: 24px;
  line-height: 24px;
  font-weight: 300;
}

.comma {
  font: bold 38px "Liberation Serif", serif;
  line-height: 20px;
  margin-top: -20px;
}

.dec-ico {
  display: block;
  font-size: 12px;
  line-height: 12px;
  text-align: right;
  white-space: nowrap;
}

.dec-ico em {
  font-style: normal;
  color: #2b88d8;
  font-size: 12px;
}

.g-style {
  width: 278px;
  padding-left: 9px;
}

.big-row {
  display: flex;
  align-items: flex-start;
}

.big {
  display: flex;
  flex-direction: column;
  align-items: center;
  box-sizing: border-box;
  height: 95px;
  margin-top: -2px;
  padding-top: 10px;
}

.big-ico {
  flex: 0 0 auto;
  margin-bottom: 1px;
}

.b-cond {
  width: 98px;
}

.b-cond .big-ico {
  margin-bottom: 8px;
}

.b-table {
  width: 108px;
  background: #e9e9e9;
  border: 1px solid #8c8c8c;
  border-radius: 6px;
}

.b-table .big-ico {
  margin-bottom: 1px;
  margin-left: 8px;
}

.b-cell {
  width: 56px;
}

.g-cells {
  width: 188px;
  padding-left: 8px;
}

.b-ins,
.b-del,
.b-frm {
  padding-top: 10px;
}

.b-ins .big-ico,
.b-del .big-ico {
  margin-bottom: 8px;
}

.b-ins {
  width: 64px;
}

.b-del {
  width: 52px;
}

.b-frm {
  width: 56px;
}

.b-frm .big-ico {
  margin-top: -5px;
  margin-bottom: 9px;
}

.b-ins .chev,
.b-del .chev,
.b-frm .chev {
  margin-top: 5px;
}

.g-edit {
  width: 219px;
}

.edit-col {
  display: flex;
  flex-direction: column;
  width: 65px;
  padding: 3px 0 0 14px;
  box-sizing: border-box;
  gap: 12px;
}

.edit-row {
  display: flex;
  align-items: center;
  gap: 6px;
  height: 20px;
}

.sigma {
  font-size: 21px;
  font-weight: 300;
  line-height: 20px;
  width: 20px;
  text-align: center;
}

.sigma-chev {
  margin-left: 12px;
}

.b-sort {
  width: 86px;
  padding-top: 6px;
}

.b-sort .big-ico,
.b-find .big-ico {
  margin-bottom: 3px;
}

.b-find {
  width: 54px;
  padding-top: 6px;
}

.sort-a {
  font-size: 19px;
  fill: #2b88d8;
}

.sort-z {
  font-size: 19px;
  fill: #555;
}

.g-add {
  width: 77px;
}

.b-add {
  width: 76px;
  padding-top: 6px;
}

.b-add .big-ico {
  margin-bottom: 3px;
}

.ribbon-collapse {
  width: 8px;
  height: 8px;
  margin: 97px 0 0 16px;
  border-right: 1.3px solid #444;
  border-bottom: 1.3px solid #444;
  transform: rotate(45deg);
}

.formula {
  display: flex;
  align-items: center;
  flex: 0 0 29px;
  margin: 11px 9px 0 10px;
}

.namebox,
.fx-box,
.formula-input {
  display: flex;
  align-items: center;
  box-sizing: border-box;
  height: 29px;
  background: #fff;
  border: 1px solid #e2e2e2;
  border-radius: 6px;
  font-size: 15px;
}

.namebox {
  width: 135px;
  justify-content: space-between;
  padding: 0 8px 2px 6px;
}

.dots-v {
  display: block;
  width: 3px;
  height: 3px;
  margin: 0 12px 0 12px;
  border-radius: 50%;
  background: #444;
  box-shadow: 0 -5px 0 #444, 0 5px 0 #444;
}

.fx-box {
  width: 106px;
  gap: 12px;
  padding-left: 7px;
}

.fx {
  font: italic 600 19px "Liberation Serif", serif;
}

.fx-box .chev {
  margin-left: -3px;
}

.formula-input {
  flex: 1;
  justify-content: space-between;
  margin-left: 6px;
  padding: 0 9px 2px 12px;
}

.sheet {
  display: flex;
  flex: 0 0 683px;
  margin-top: 8px;
}

.grid {
  display: grid;
  grid-template-columns: 34px 93px 114px repeat(21, 80px);
  grid-auto-rows: 24px;
  width: 1894px;
  height: 683px;
  overflow: hidden;
  background: #fff;
  font-family: Roboto, "Noto Sans", sans-serif;
  font-size: 15.7px;
  color: #222;
}

.corner,
.col-head {
  box-sizing: border-box;
  background: #f0f0f0;
  border-bottom: 1px solid #9e9e9e;
}

.corner {
  position: relative;
  border-right: 1px solid #bdbdbd;
}

.corner i {
  position: absolute;
  right: 3px;
  bottom: 3px;
  border-style: solid;
  border-width: 0 0 16px 16px;
  border-color: transparent transparent #d8d8d8 transparent;
}

.col-head {
  display: flex;
  align-items: center;
  justify-content: center;
  padding-top: 1px;
  border-right: 1px solid #d8d8d8;
  font-size: 16px;
  color: #444;
}

.col-head.sel {
  background: #e1e1e1;
  border-bottom: 2px solid #1a6b3c;
  color: #1a6b3c;
}

.row-head {
  display: flex;
  align-items: center;
  justify-content: center;
  box-sizing: border-box;
  padding-top: 1px;
  background: #f0f0f0;
  border-right: 1px solid #9e9e9e;
  border-bottom: 1px solid #d8d8d8;
  font-size: 16px;
  color: #444;
}

.row-head.sel {
  background: #e1e1e1;
  border-right: 2px solid #1a6b3c;
  color: #1a6b3c;
}

.cell {
  position: relative;
  box-sizing: border-box;
  overflow: hidden;
  padding: 0 3px;
  border-right: 1px solid #e1e1e1;
  border-bottom: 1px solid #e1e1e1;
  line-height: 25px;
  white-space: nowrap;
}

.cell.num {
  text-align: right;
}

.cell.active {
  overflow: visible;
  box-shadow: inset 0 0 0 2px #1a6b3c;
  z-index: 1;
}

.cell.active::after {
  content: "";
  position: absolute;
  right: -4px;
  bottom: -3px;
  width: 5px;
  height: 5px;
  background: #1a6b3c;
  border: 1px solid #fff;
}

.vscroll {
  position: relative;
  width: 24px;
  background: #f3f3f3;
}

.tri {
  position: absolute;
  display: block;
  border-style: solid;
  border-color: transparent;
}

.tri-up {
  top: 5px;
  left: 7px;
  border-width: 0 5px 8px;
  border-bottom-color: #707070;
}

.tri-down {
  bottom: 4px;
  left: 7px;
  border-width: 8px 5px 0;
  border-top-color: #707070;
}

.tri-left {
  left: 4px;
  top: 6px;
  border-width: 5px 8px 5px 0;
  border-right-color: #707070;
}

.tri-right {
  right: 6px;
  top: 6px;
  border-width: 5px 0 5px 8px;
  border-left-color: #707070;
}

.vthumb {
  position: absolute;
  top: 21px;
  left: 8px;
  width: 11px;
  height: 438px;
  background: #707070;
  border-radius: 6px;
}

.sheet-tabs {
  display: flex;
  align-items: flex-start;
  flex: 0 0 40px;
  background: #f0f0f0;
}

.nav-arrow {
  display: block;
  width: 8px;
  height: 8px;
  margin-top: 14px;
  border-left: 1.3px solid #9a9a9a;
  border-bottom: 1.3px solid #9a9a9a;
  transform: rotate(45deg);
}

.nav-left {
  margin-left: 34px;
}

.nav-right {
  margin-left: 26px;
  transform: rotate(225deg);
}

.sheet-tab {
  box-sizing: border-box;
  width: 87px;
  height: 35px;
  margin-left: 63px;
  padding: 0 10px;
  background: #fff;
  border-radius: 0 0 6px 6px;
  box-shadow: 0 1px 2px rgba(0, 0, 0, 0.15);
  font-size: 15.6px;
  font-weight: 600;
  text-align: center;
  color: #333;
}

.sheet-tab span {
  display: block;
  height: 30px;
  line-height: 33px;
  border-bottom: 2px solid #107c41;
}

.tab-sep {
  width: 1px;
  height: 24px;
  margin: 8px 0 0 5px;
  background: #c8c8c8;
}

.add-sheet {
  margin-left: 52px;
  font-size: 26px;
  line-height: 34px;
  font-weight: 300;
}

.dots-tabs {
  margin: 17px 11px 0 853px;
}

.hscroll {
  position: relative;
  width: 712px;
  height: 22px;
  margin: 8px 0 0 8px;
  background: #f3f3f3;
  border-radius: 10px;
}

.hthumb {
  position: absolute;
  left: 21px;
  right: 24px;
  top: 5px;
  height: 11px;
  background: #707070;
  border-radius: 6px;
}

.status {
  position: relative;
  display: flex;
  align-items: center;
  flex: 0 0 25px;
  background: #f3f3f3;
  font-size: 12.4px;
}

.st-ready {
  margin-left: 15px;
}

.st-macro {
  margin-left: 38px;
}

.st-a11y {
  margin-left: 22px;
}

.st-a11y-text {
  margin-left: 4px;
}

.st-zoom {
  display: flex;
  align-items: center;
  gap: 16px;
  margin-left: auto;
  margin-right: 9px;
}

.popup {
  position: absolute;
  left: 1217px;
  top: 198px;
  z-index: 5;
  display: flex;
  flex-direction: column;
  box-sizing: border-box;
  width: 626px;
  height: 819px;
  background: #fff;
  border: 1px solid #666;
  border-radius: 6px;
}

.gallery {
  display: flex;
  flex: 0 0 733px;
  border-bottom: 1px solid #d0d0d0;
}

.styles {
  flex: 1;
}

.style-group {
  padding: 0 0 16px 5px;
  border-top: 1px solid #d6d6d6;
}

.style-group.first {
  border-top: none;
}

.style-group:last-child {
  padding-bottom: 0;
}

.style-group h4 {
  margin: 0 0 3px 12px;
  height: 40px;
  line-height: 40px;
  font-size: 13.6px;
  font-weight: 700;
  color: #222;
}

.thumbs {
  display: grid;
  grid-template-columns: repeat(7, 76px);
  gap: 10px;
}

.thumbs svg {
  display: block;
}

.gal-scroll {
  position: relative;
  flex: 0 0 21px;
  background: #f3f3f3;
  border-top-right-radius: 6px;
}

.gal-thumb {
  position: absolute;
  top: 22px;
  left: 5px;
  width: 11px;
  height: 680px;
  background: #707070;
}

.menu-item {
  display: flex;
  align-items: center;
  flex: 0 0 36px;
  padding-left: 14px;
  gap: 11px;
  font-size: 14px;
  color: #333;
}

.grip {
  display: flex;
  justify-content: center;
  gap: 3px;
  padding-top: 6px;
}

.grip i {
  width: 2px;
  height: 2px;
  background: #bbb;
}
</style>
